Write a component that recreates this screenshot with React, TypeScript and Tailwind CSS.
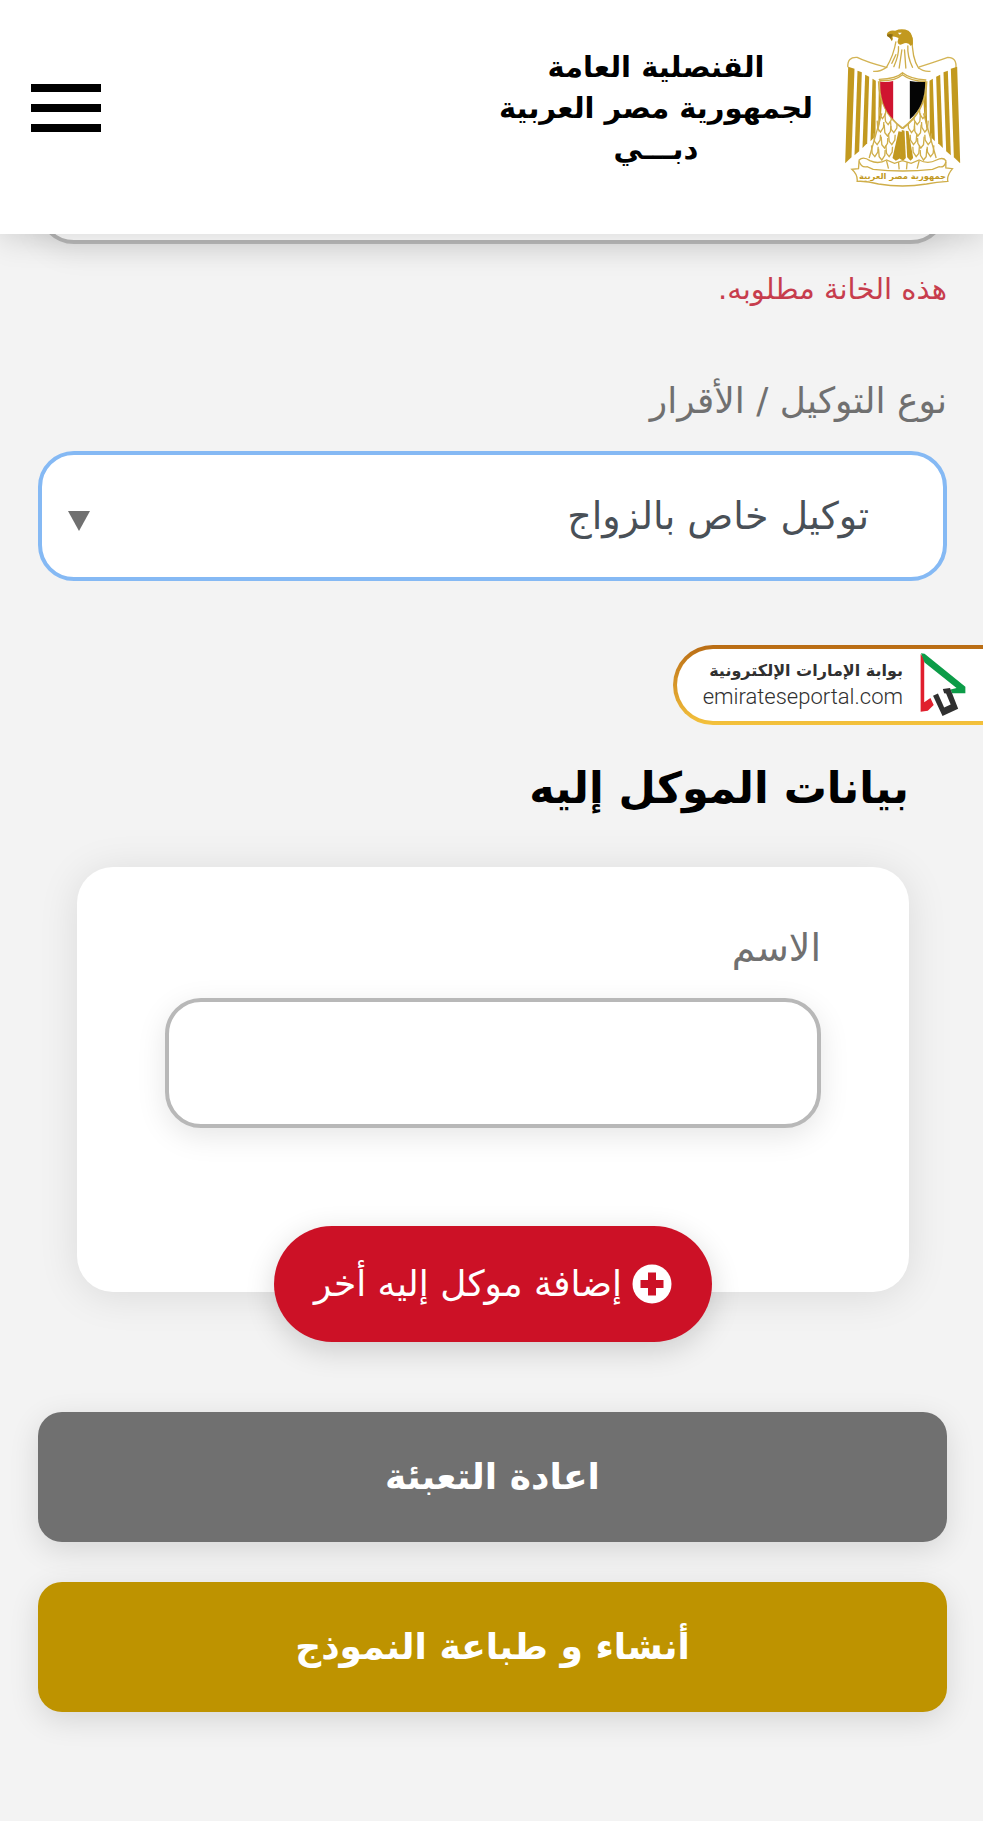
import { useState } from "react";
import type { ReactNode } from "react";

type ActionButtonProps = {
  children: ReactNode;
  className?: string;
  type?: "button" | "submit" | "reset";
};

const leftFeathers = [
  "M85 166 L104 172 L95 438 L76 456 Z",
  "M113 178 L126 183 L118 420 L104 432 Z",
  "M136 190 L148 196 L142 396 L128 410 Z",
  "M158 202 L168 208 L167 374 L152 390 Z",
  "M177 215 L178 232 L186 272 L184 306 L175 366 Z",
];

const scales = [
  [188, 300], [205, 318], [182, 340], [203, 352], [222, 342], [172, 378], [194, 388], [216, 378],
  [165, 414], [186, 424], [208, 414],
];

function EagleEmblem() {
  return (
    <svg viewBox="70 50 356 480" className="h-40 w-[119px] shrink-0" role="img" aria-label="شعار جمهورية مصر العربية">
      <path d="M84 168 Q82 136 112 138 Q140 152 200 168 Q180 182 160 180 M408 172 Q412 138 384 138 Q345 152 294 168 Q310 182 332 180" fill="none" stroke="#d3b455" strokeWidth="4" />
      {[false, true].map((mirrored) => (
        <g key={String(mirrored)} transform={mirrored ? "translate(497 0) scale(-1 1)" : undefined}>
          <g fill="#c2991f">
            {leftFeathers.map((d) => (
              <path key={d} d={d} />
            ))}
          </g>
          <g fill="none" stroke="#cfae4a" strokeWidth="4">
            {scales.map(([x, y]) => (
              <path key={`${x}-${y}`} d={`M${x - 10} ${y - 12} L${x - 8} ${y + 12} L${x} ${y + 22} L${x + 9} ${y + 8} L${x + 10} ${y - 8}`} />
            ))}
            <path d="M176 210 Q178 300 248 352 M186 306 L148 440" />
          </g>
        </g>
      ))}
      <path d="M218 76 Q212 130 198 164 Q210 176 226 172 L248 184 L270 172 Q284 180 298 168 Q276 140 278 76 Z" fill="#fff" />
      <g fill="none" stroke="#cfae4a" strokeWidth="4" strokeLinecap="round">
        <path d="M228 92 Q222 130 200 168 M277 80 Q276 140 296 170 M236 106 Q238 130 222 166 M246 116 L238 170 M254 116 L258 170 M264 104 Q262 134 278 168 M228 130 L216 156" />
        <path d="M178 204 Q230 202 248 184 Q270 202 318 206" />
      </g>
      <path d="M201 68 Q206 55 226 58 Q246 50 266 58 Q280 68 279 98 L273 104 Q264 90 248 98 Q236 104 233 92 L236 80 Q224 74 218 76 Q222 84 216 90 Q212 78 202 74 Z" fill="#c2991f" />
      <path d="M202 70 Q212 66 220 70 Q212 76 216 88 Q212 78 202 74 Z" fill="#8a6c16" />
      <path d="M234 64 H246 L240 70 Z" fill="#fff" />
      <path d="M180 208 Q224 210 248 190 Q274 210 317 210 Q318 300 248 350 Q178 300 180 208 Z" fill="#fff" stroke="#cfae4a" strokeWidth="4" />
      <path d="M181 211 Q204 213 220 209 L220 324 Q180 284 181 211 Z" fill="#cf1430" />
      <path d="M270 209 Q290 213 316 212 Q316 286 270 324 Z" fill="#050505" />
      <g fill="#c2991f">
        <path d="M236 360 L218 440 L228 448 L242 440 L248 362 Z" />
        <path d="M246 356 L240 442 L250 448 L258 440 L254 358 Z" />
        <path d="M258 358 L262 438 L272 448 L280 440 L266 360 Z" />
      </g>
      <path d="M118 446 Q130 434 150 448 Q176 460 200 446 L224 456 L248 448 L274 456 L298 446 Q324 460 350 446 Q370 436 378 448 L378 470 L398 472 Q380 494 384 510 Q350 512 320 518 Q248 530 176 518 Q140 508 112 510 Q114 490 96 474 L116 472 Z" fill="#fff" stroke="#cfae4a" strokeWidth="4" />
      <path d="M118 450 Q124 470 142 466 L160 474 Q248 484 338 474 L358 466 Q374 470 378 452 M200 448 L206 472 M236 452 L238 474 M262 452 L260 474 M298 448 L292 472" fill="none" stroke="#cfae4a" strokeWidth="4" />
      <text x="248" y="503" textAnchor="middle" fontFamily="'DejaVu Sans', sans-serif" fontSize="25" fontWeight="700" fill="#c2991f">
        جمهورية مصر العربية
      </text>
    </svg>
  );
}

function PortalCursor() {
  return (
    <svg viewBox="19 17 147 200" className="h-[66px] w-12 shrink-0" aria-hidden="true">
      <path d="M24 22 L35 36 L35 170 L54 157 L64 178 L46 196 L24 199 Z" fill="#e01f2d" />
      <path d="M25 20 L36 21 L161 122 L161 142 L120 142 L116 131 L134 126 L36 48 Z" fill="#0c9c48" />
      <path d="M62 150 L77 143 L96 186 L116 177 L102 143 L96 142 L92 129 L114 126 L139 190 L91 212 Z" fill="#303030" />
    </svg>
  );
}

function ActionButton({ children, className = "", type = "button" }: ActionButtonProps) {
  return (
    <button
      type={type}
      className={`w-full rounded-3xl py-10 text-[36px] leading-[50px] font-bold text-white shadow-[0_8px_30px_rgba(0,0,0,0.12)] ${className}`}
    >
      {children}
    </button>
  );
}

export default function App() {
  const [mandateType, setMandateType] = useState("marriage");
  const [name, setName] = useState("");

  return (
    <div dir="rtl" lang="ar" className="min-h-screen bg-[#f3f3f3] font-['DejaVu_Sans',sans-serif]">
      <header className="relative z-10 flex items-center justify-between bg-white pt-7 pr-[21px] pb-[46px] pl-[31px] shadow-[0_4px_30px_rgba(0,0,0,0.16)]">
        <a href="#" className="flex items-center gap-[30px]">
          <EagleEmblem />
          <span className="text-center text-[29px] leading-[41px] font-bold text-black">
            القنصلية العامة
            <br />
            لجمهورية مصر العربية
            <br />
            دبـــي
          </span>
        </a>
        <button type="button" aria-label="القائمة" className="flex w-[70px] flex-col gap-3">
          <span className="h-2 w-full bg-black" />
          <span className="h-2 w-full bg-black" />
          <span className="h-2 w-full bg-black" />
        </button>
      </header>

      <main className="pr-9 pb-24 pl-[38px]">
        <form onSubmit={(e) => e.preventDefault()}>
          <input
            type="text"
            aria-label="هذه الخانة مطلوبه."
            className="-mt-[120px] block h-[130px] w-full rounded-[36px] border-4 border-[#b8b8b8] bg-white px-16 text-[36px] text-[#495057] shadow-[0_8px_30px_rgba(0,0,0,0.08)] outline-none"
          />
          <p className="mt-[25px] text-[29px] leading-10 text-[#c73d4d]">هذه الخانة مطلوبه.</p>

          <label htmlFor="mandate" className="mt-[67px] block text-[36px] leading-[50px] text-[#707070]">
            نوع التوكيل / الأقرار
          </label>
          <div className="relative mt-[25px]">
            <select
              id="mandate"
              value={mandateType}
              onChange={(e) => setMandateType(e.target.value)}
              className="h-[130px] w-full appearance-none rounded-[36px] border-4 border-[#85b9f4] bg-white pr-[74px] pl-24 text-[38px] text-[#495057] outline-none"
            >
              <option value="marriage">توكيل خاص بالزواج</option>
            </select>
            <svg viewBox="0 0 22 20" className="pointer-events-none absolute top-[60px] left-[30px] h-5 w-[22px]" aria-hidden="true">
              <path d="M0 0 H22 L11 20 Z" fill="#707070" />
            </svg>
          </div>

          <a
            href="#"
            className="mt-16 -mr-9 block w-[310px] rounded-l-full bg-linear-to-b from-[#b96c14] to-[#f4c23c] py-1 pl-1"
          >
            <span className="flex items-center gap-4 rounded-l-full bg-white py-[3px] pr-4">
              <PortalCursor />
              <span className="whitespace-nowrap text-[#303030]">
                <span className="block text-base leading-6 font-bold">بوابة الإمارات الإلكترونية</span>
                <span dir="ltr" className="block text-right font-['Roboto',sans-serif] text-[22px] leading-7 font-light">
                  emirateseportal.com
                </span>
              </span>
            </span>
          </a>

          <section className="pr-[38px] pl-[39px]">
            <h2 className="mt-[30px] text-[43px] leading-[66px] font-bold text-black">بيانات الموكل إليه</h2>
            <div className="mt-[46px] flex flex-col rounded-[36px] bg-white px-[88px] pt-14 shadow-[0_4px_40px_rgba(0,0,0,0.1)]">
              <label htmlFor="name" className="text-[38px] leading-[50px] text-[#707070]">
                الاسم
              </label>
              <input
                id="name"
                type="text"
                value={name}
                onChange={(e) => setName(e.target.value)}
                className="mt-[25px] h-[130px] w-full rounded-[36px] border-4 border-[#b8b8b8] bg-white px-16 text-[36px] text-[#495057] shadow-[0_8px_30px_rgba(0,0,0,0.1)] outline-none"
              />
              <div className="-mb-[50px] flex justify-center pt-[98px]">
                <button
                  type="button"
                  className="flex h-[116px] items-center gap-[10px] rounded-full bg-[#cc1126] px-10 text-[36px] whitespace-nowrap text-white shadow-[0_8px_30px_rgba(0,0,0,0.16)]"
                >
                  <svg viewBox="0 0 40 40" className="size-10 shrink-0" aria-hidden="true">
                    <circle cx="20" cy="20" r="19.5" fill="#fff" />
                    <path d="M16 8.5 H24 V16 H31.5 V24 H24 V31.5 H16 V24 H8.5 V16 H16 Z" fill="#cc1126" />
                  </svg>
                  إضافة موكل إليه أخر
                </button>
              </div>
            </div>
          </section>

          <div className="mt-[120px] flex flex-col gap-10">
            <ActionButton type="reset" className="bg-[#707070]">
              اعادة التعبئة
            </ActionButton>
            <ActionButton type="submit" className="bg-[#be9300]">
              أنشاء و طباعة النموذج
            </ActionButton>
          </div>
        </form>
      </main>
    </div>
  );
}
